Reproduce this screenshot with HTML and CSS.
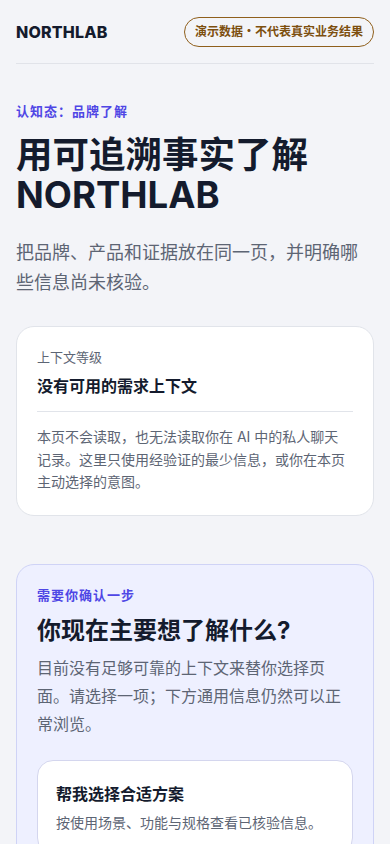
FILE: index.html
```html
<!DOCTYPE html>
<html lang="zh-CN">
<head>
    <meta charset="UTF-8">
    <meta name="viewport" content="width=device-width, initial-scale=1.0">
    <title>NORTHLAB</title>
    <link rel="stylesheet" href="styles.css">
</head>
<body>
    <div class="page">
        <!-- En-tête -->
        <header class="header">
            <div class="brand">NORTHLAB</div>
            <div class="demo-badge">演示数据・不代表真实业务结果</div>
        </header>

        <!-- Intro -->
        <section class="hero">
            <p class="eyebrow">认知态：品牌了解</p>
            <h1>用可追溯事实了解 NORTHLAB</h1>
            <p class="lead">把品牌、产品和证据放在同一页，并明确哪些信息尚未核验。</p>
        </section>

        <!-- Niveau de contexte -->
        <section class="card">
            <p class="card-label">上下文等级</p>
            <h3 class="card-title">没有可用的需求上下文</h3>
            <div class="card-divider"></div>
            <p class="card-text">本页不会读取，也无法读取你在 AI 中的私人聊天记录。这里只使用经验证的最少信息，或你在本页主动选择的意图。</p>
        </section>

        <!-- Choix de l'intention -->
        <section class="card card-ask">
            <p class="eyebrow">需要你确认一步</p>
            <h2>你现在主要想了解什么?</h2>
            <p class="ask-text">目前没有足够可靠的上下文来替你选择页面。请选择一项；下方通用信息仍然可以正常浏览。</p>

            <div class="options">
                <button class="option">
                    <span class="option-title">帮我选择合适方案</span>
                    <span class="option-text">按使用场景、功能与规格查看已核验信息。</span>
                </button>
                <button class="option">
                    <span class="option-title">了解品牌背景</span>
                    <span class="option-text">查看品牌历史、资质与公开证据。</span>
                </button>
            </div>
        </section>
    </div>
</body>
</html>
```

FILE: styles.css
```css
/* styles.css */
* {
    margin: 0;
    padding: 0;
    box-sizing: border-box;
}

body {
    font-family: Inter, "Noto Sans CJK SC", sans-serif;
    background-color: #f3f4f8;
    color: #141b2d;
}

.page {
    padding: 0 16px 40px;
}

.header {
    display: flex;
    justify-content: space-between;
    align-items: center;
    height: 64px;
    border-bottom: 1px solid #e1e3e9;
}

.brand {
    font-size: 16px;
    font-weight: 800;
    letter-spacing: 0.2px;
    color: #141b2d;
}

.demo-badge {
    border: 1px solid #8f5f1c;
    border-radius: 999px;
    padding: 0 10px;
    height: 30px;
    line-height: 28px;
    font-size: 12px;
    font-weight: 700;
    color: #7d4f0f;
}

.hero {
    padding-top: 37px;
}

.eyebrow {
    font-size: 13px;
    letter-spacing: 1px;
    font-weight: 700;
    color: #4f46e5;
    line-height: 20px;
}

h1 {
    margin-top: 14px;
    font-size: 36.5px;
    line-height: 40px;
    font-weight: 700;
    color: #141b2d;
}

.lead {
    margin-top: 23px;
    font-size: 18px;
    line-height: 30px;
    color: #5d6574;
}

.card {
    margin-top: 28px;
    background-color: white;
    border: 1px solid #e1e4ea;
    border-radius: 18px;
    padding: 20px 20px 21px;
}

.card-label {
    font-size: 13px;
    line-height: 20px;
    color: #5d6574;
}

.card-title {
    margin-top: 7px;
    font-size: 16px;
    line-height: 24px;
    font-weight: 700;
    color: #141b2d;
}

.card-divider {
    height: 1px;
    background-color: #e1e4ea;
    margin: 13px 0 14px;
}

.card-text {
    font-size: 14px;
    line-height: 22.5px;
    padding-right: 2px;
    color: #5d6574;
}

.card-ask {
    margin-top: 48px;
    background-color: #eef0ff;
    border-color: #cfd3f6;
    padding-top: 20px;
}

h2 {
    margin-top: 9px;
    font-size: 24px;
    line-height: 34px;
    font-weight: 700;
    color: #141b2d;
}

.ask-text {
    margin-top: 6px;
    font-size: 16px;
    line-height: 28px;
    color: #5d6574;
}

.options {
    display: flex;
    flex-direction: column;
    gap: 12px;
    margin-top: 22px;
}

.option {
    display: flex;
    flex-direction: column;
    gap: 8px;
    text-align: left;
    font-family: inherit;
    background-color: white;
    border: 1px solid #d4d6ee;
    border-radius: 16px;
    padding: 22px 18px 20px;
    cursor: pointer;
}

.option-title {
    font-size: 16px;
    line-height: 22px;
    font-weight: 700;
    color: #141b2d;
}

.option-text {
    font-size: 14px;
    line-height: 20px;
    color: #5d6574;
}
```
